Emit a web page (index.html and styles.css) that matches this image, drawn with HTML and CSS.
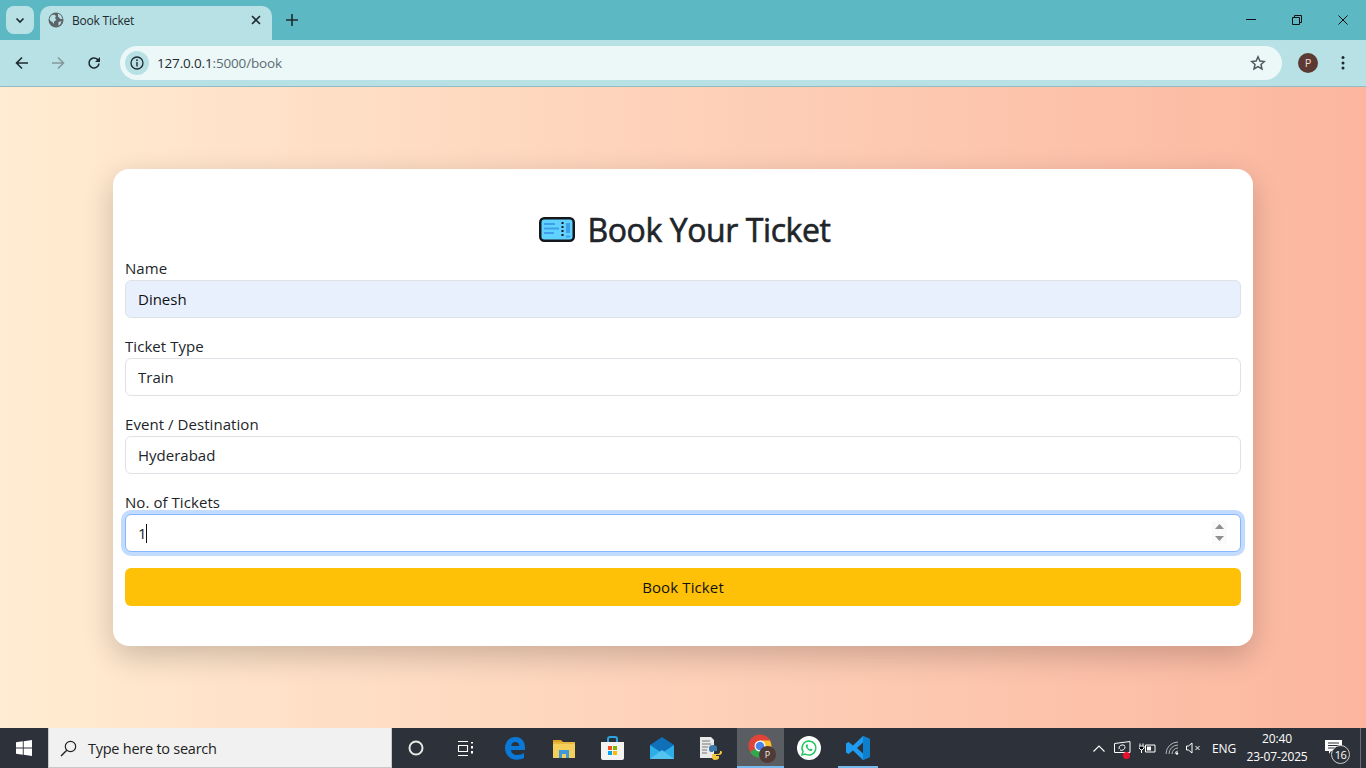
FILE: index.html
```html
<!DOCTYPE html>
<html lang="en">
<head>
  <meta charset="UTF-8">
  <title>Book Ticket</title>
  <link rel="stylesheet" href="styles.css">
</head>
<body>
  <div class="tabstrip">
    <div class="tab-menu">
      <svg width="12" height="12" viewBox="0 0 12 12"><path d="M2.5 4.500 6 8l3.500-3.500" fill="none" stroke="#1f2a2e" stroke-width="1.700"/></svg>
    </div>
    <div class="tab">
      <svg class="tab-globe" width="16" height="16" viewBox="0 0 16 16"><circle cx="8" cy="8" r="7.500" fill="#5c6468"/><path d="M3 3.500 6 2.500l2 1.500-1 2 1.500 2-2 1-1 3-1-2-2-1-1-2zM10 1.500l3 2 1.500 3.500-2 0-2.500-2.500zM10.500 10l3-1-1 3-2 2z" fill="#b8e1e6"/></svg>
      <span class="tab-title">Book Ticket</span>
      <svg width="10" height="10" viewBox="0 0 10 10"><path d="M1 1l8 8M9 1l-8 8" stroke="#1f2a2e" stroke-width="1.600"/></svg>
    </div>
    <svg class="tab-new" width="12" height="12" viewBox="0 0 12 12"><path d="M6 0v12M0 6h12" stroke="#1f2a2e" stroke-width="1.600"/></svg>
    <div class="win-controls">
      <span class="win-btn"><svg width="10" height="10" viewBox="0 0 10 10"><path d="M0 4.500h10" stroke="#111" stroke-width="1"/></svg></span>
      <span class="win-btn"><svg width="10" height="10" viewBox="0 0 10 10"><path d="M.5 2.500h7v7h-7zM2.500 2.500v-2h7v7h-2" fill="none" stroke="#111"/></svg></span>
      <span class="win-btn"><svg width="10" height="10" viewBox="0 0 10 10"><path d="M.5.500l9 9M9.500.500l-9 9" stroke="#111"/></svg></span>
    </div>
  </div>

  <div class="toolbar">
    <svg class="nav-icon" width="14" height="14" viewBox="0 0 14 14"><path d="M13 7H2M7 1.500 1.500 7 7 12.500" fill="none" stroke="#1f2a2e" stroke-width="1.600"/></svg>
    <svg class="nav-icon" width="14" height="14" viewBox="0 0 14 14"><path d="M1 7h11M7 1.500 12.500 7 7 12.500" fill="none" stroke="#87989c" stroke-width="1.600"/></svg>
    <svg class="nav-icon" width="14" height="14" viewBox="0 0 14 14"><path d="M12 7.500A5 5 0 1 1 10.500 3.400L12.500 5" fill="none" stroke="#1f2a2e" stroke-width="1.600"/><path d="M13 1v5H8z" fill="#1f2a2e"/></svg>
    <div class="omnibox">
      <span class="site-info">
        <svg width="14" height="14" viewBox="0 0 14 14"><circle cx="7" cy="7" r="6" fill="none" stroke="#1f2a2e" stroke-width="1.300"/><path d="M7 6v4.500" stroke="#1f2a2e" stroke-width="1.400"/><circle cx="7" cy="4.200" r=".9" fill="#1f2a2e"/></svg>
      </span>
      <span class="url">127.0.0.1<span class="url-rest">:5000/book</span></span>
      <svg class="star" width="16" height="16" viewBox="0 0 16 16"><path d="M8 1.800l1.900 4.200 4.500.5-3.400 3 1 4.500L8 11.700 4 14l1-4.500-3.400-3 4.500-.5z" fill="none" stroke="#4d5a5e" stroke-width="1.500"/></svg>
    </div>
    <span class="avatar">P</span>
    <svg class="kebab" width="4" height="16" viewBox="0 0 4 16"><circle cx="2" cy="2.500" r="1.500" fill="#1f2a2e"/><circle cx="2" cy="8" r="1.500" fill="#1f2a2e"/><circle cx="2" cy="13" r="1.500" fill="#1f2a2e"/></svg>
  </div>

  <main class="page">
    <form class="card">
      <h2 class="card-title">
        <svg width="36" height="25" viewBox="0 0 36 25"><rect x="1.250" y="1.250" width="33.500" height="22.500" rx="4" fill="#5fd2ff" stroke="#14181c" stroke-width="2.500"/><path d="M5 6h11v2H5zM5 10.500h15v2H5zM5 15h10v2H5zM27 6h4v10h-4zM27 18.500h4v2h-4z" fill="#3f9fea"/><path d="M23.500 5v2M23.500 9v2M23.500 13v2M23.500 17v2" stroke="#14181c" stroke-width="2"/></svg>
        <span>Book Your Ticket</span>
      </h2>
      <label class="field-label">Name</label>
      <input class="field field-autofill" type="text" value="Dinesh">
      <label class="field-label">Ticket Type</label>
      <input class="field" type="text" value="Train">
      <label class="field-label">Event / Destination</label>
      <input class="field" type="text" value="Hyderabad">
      <label class="field-label">No. of Tickets</label>
      <div class="field-wrap">
        <input class="field field-focus" type="text" value="1">
        <span class="caret"></span>
        <span class="spinner">
          <svg width="9" height="5" viewBox="0 0 9 5"><path d="M4.500 0 9 5H0z" fill="#8f8f8f"/></svg>
          <svg width="9" height="5" viewBox="0 0 9 5"><path d="M0 0h9L4.500 5z" fill="#8f8f8f"/></svg>
        </span>
      </div>
      <button class="submit" type="button">Book Ticket</button>
    </form>
  </main>

  <footer class="taskbar">
    <div class="start">
      <svg width="16" height="16" viewBox="0 0 16 16"><path d="M0 2.300 6.800 1.300V7.500H0zM7.700 1.200 16 0V7.500H7.700zM0 8.400H6.800V14.700L0 13.700zM7.700 8.400H16V16L7.700 14.800z" fill="#fff"/></svg>
    </div>
    <div class="search">
      <svg width="17" height="17" viewBox="0 0 17 17"><circle cx="10.500" cy="6.500" r="5.200" fill="none" stroke="#222" stroke-width="1.200"/><path d="M6.800 10.200 1 16" stroke="#222" stroke-width="1.400"/></svg>
      <span>Type here to search</span>
    </div>
    <div class="task-icons">
      <span class="task-slot task-nudge"><svg width="16" height="16" viewBox="0 0 16 16"><circle cx="8" cy="8" r="6.500" fill="none" stroke="#e8e8e8" stroke-width="2"/></svg></span>
      <span class="task-slot task-nudge"><svg width="16" height="15" viewBox="0 0 16 15"><path d="M1 .500h10M1 14.500h10M1.500 4.500h9v6h-9z" fill="none" stroke="#fff" stroke-width="1.100"/><path d="M14 1h2v1.500h-2zM14 5h2v2.500h-2zM14 10h2v2.500h-2z" fill="#fff"/></svg></span>
      <span class="task-slot"><svg width="22" height="24" viewBox="0 0 22 24"><path d="M1 12C1 5 6 1 11.500 1 17.500 1 21 5.500 21 11.500V14H7c.3 3.500 3 5 6 5 3 0 5.500-1 7-2v5c-2 1-4.500 1.700-7.500 1.700C6 23.700 1 19 1 12zM7.200 10h8c0-2.500-1.500-4-3.900-4S7.600 7.500 7.200 10z" fill="#0a78d7"/></svg></span>
      <span class="task-slot"><svg width="22" height="20" viewBox="0 0 22 20"><path d="M0 2h8l2 2H0z" fill="#e0a020"/><path d="M0 4h22v16H0z" fill="#f5cf5c"/><path d="M0 4h22v2H0z" fill="#e9b93d"/><path d="M6 12h10v8h-3v-4h-4v4H6z" fill="#3d9ad9"/></svg></span>
      <span class="task-slot"><svg width="23" height="24" viewBox="0 0 23 24"><path d="M7 6V3a2 2 0 0 1 2-2h5a2 2 0 0 1 2 2v3" fill="none" stroke="#2aa4e0" stroke-width="2"/><path d="M0 6h23v16a2 2 0 0 1-2 2H2a2 2 0 0 1-2-2z" fill="#f3f3f3"/><path d="M7 10h4v4H7z" fill="#f25022"/><path d="M12 10h4v4h-4z" fill="#7fba00"/><path d="M7 15h4v4H7z" fill="#00a4ef"/><path d="M12 15h4v4h-4z" fill="#ffb900"/></svg></span>
      <span class="task-slot"><svg width="24" height="22" viewBox="0 0 24 22"><path d="M12 0 24 8v14H0V8z" fill="#0f6fb8"/><path d="M0 8l12 8 12-8v14H0z" fill="#2eaee8"/><path d="M0 22 12 13l12 9z" fill="#55c3f0"/></svg></span>
      <span class="task-slot"><svg width="24" height="24" viewBox="0 0 24 24"><path d="M1 1h11l3 3v18H1z" fill="#e9e9e9"/><path d="M3 5h8M3 8h9M3 11h6M3 14h5M3 17h5" stroke="#777" stroke-width="1"/><path d="M10 12c0-2 1-3 4-3s4 1 4 3v3h-4v1h-2c-1 0-2-1-2-3z" fill="#3a79ac"/><path d="M23 16c0 2-1 3-3 3h-3v1h3v2c0 1-2 2-4 2s-3-1-3-3v-3h6c1 0 2-1 2-2v-1c1 0 2 0 2 1z" fill="#f5c93b"/></svg></span>
      <span class="task-slot task-active">
        <svg width="26" height="26" viewBox="0 0 26 26"><circle cx="12" cy="12" r="11.500" fill="#de4437"/><path d="M12 12 2 18A11.500 11.500 0 0 0 12 23.500z" fill="#2fa84f"/><path d="M12 12V23.500A11.500 11.500 0 0 0 22 6.500H12z" fill="#fbc02d"/><circle cx="12" cy="12" r="5.500" fill="#fff"/><circle cx="12" cy="12" r="4.300" fill="#4a84ea"/></svg>
        <span class="task-badge">P</span>
      </span>
      <span class="task-slot"><svg width="24" height="24" viewBox="0 0 24 24"><circle cx="12" cy="12" r="12" fill="#fff"/><path d="M12 5a7 7 0 0 0-6 10.600L5 19l3.500-.9A7 7 0 1 0 12 5z" fill="none" stroke="#25c560" stroke-width="1.500"/><path d="M9.500 8.500c-1 .8-1 2 0 3.500s2.500 3 4.200 3c1 0 1.800-.7 1.800-1.500l-1.800-1-.8.800c-1-.3-2-1.300-2.500-2.500l.8-.8-1-2z" fill="#25c560"/></svg></span>
      <span class="task-slot task-open"><svg width="24" height="24" viewBox="0 0 24 24"><path d="M17 0 24 3v18l-7 3L7 14.500 2.500 18 0 16.500V7.500L2.500 6 7 9.500zM17 6.500 11 12l6 5.500z" fill="#1f9cf0"/><path d="M17 0 24 3v18l-7 3z" fill="#0d7fcc"/></svg></span>
    </div>
    <div class="tray">
      <span class="tray-item tray-chevron"><svg width="12" height="7" viewBox="0 0 12 7"><path d="M.5 6.500 6 1l5.500 5.500" fill="none" stroke="#fff" stroke-width="1.100"/></svg></span>
      <span class="tray-item tray-meet">
        <svg width="17" height="15" viewBox="0 0 17 15"><path d="M.5 2.500 16 .5v11H.5z" fill="none" stroke="#fff"/><path d="M5 8a3.500 3.500 0 0 1 6-3M11 5.500A3.500 3.500 0 0 1 6 9" fill="none" stroke="#fff"/></svg>
        <span class="tray-dot"></span>
      </span>
      <span class="tray-item tray-battery"><svg width="17" height="11" viewBox="0 0 17 11"><path d="M6.500 2h9.500v7H6.500z" fill="none" stroke="#fff"/><path d="M8 3.500h4v4H8z" fill="#fff"/><path d="M1 .500v2M4 .500v2M0 3h5v2L3 7H2L0 5zM2.500 7v3" stroke="#fff" stroke-width="1"/></svg></span>
      <span class="tray-item tray-wifi"><svg width="14" height="14" viewBox="0 0 14 14"><path d="M1 13A12 12 0 0 1 13 1M4 13a9 9 0 0 1 9-9M7 13a6 6 0 0 1 6-6M10 13a3 3 0 0 1 3-3" fill="none" stroke="#b5b8bb" stroke-width="1"/><circle cx="12" cy="12.500" r="1.200" fill="#fff"/></svg></span>
      <span class="tray-item tray-volume"><svg width="15" height="12" viewBox="0 0 15 12"><path d="M.5 4h2L6 1v10L2.500 8h-2z" fill="none" stroke="#fff"/><path d="M9.500 4l4 4M13.500 4l-4 4" stroke="#fff"/></svg></span>
      <span class="tray-item tray-lang">ENG</span>
      <span class="clock"><span>20:40</span><span>23-07-2025</span></span>
      <span class="notify">
        <svg width="17" height="14" viewBox="0 0 17 14"><path d="M0 0h17v11H6l-2 3v-3H0z" fill="#fff"/><path d="M3 3h11M3 5.500h11M3 8h8" stroke="#2d3139"/></svg>
        <span class="notify-count">16</span>
      </span>
      <span class="show-desktop"></span>
    </div>
  </footer>
</body>
</html>
```

FILE: styles.css
```css
* { box-sizing: border-box; }
html, body { height: 100%; }
body {
  margin: 0;
  height: 768px;
  overflow: hidden;
  display: flex;
  flex-direction: column;
  font-family: "Open Sans", "Noto Sans", sans-serif;
  color: #212529;
}

/* browser top */
.tabstrip { height: 40px; background: #5cb8c2; display: flex; align-items: flex-end; padding-left: 6px; flex: none; }
.tab-menu { width: 28px; height: 28px; margin-bottom: 6px; background: #b8e1e6; border-radius: 8px; display: flex; align-items: center; justify-content: center; }
.tab { width: 232px; height: 34px; margin-left: 6px; padding: 0 11px 6px 8px; background: #b8e1e6; border-radius: 10px 10px 0 0; display: flex; align-items: center; }
.tab-globe { flex: none; }
.tab-title { flex: 1; margin-left: 8px; font-size: 12px; letter-spacing: -.2px; color: #1f2a2e; }
.tab-new { margin: 0 0 14px 14px; }
.win-controls { margin-left: auto; height: 40px; display: flex; }
.win-btn { width: 46px; display: flex; align-items: center; justify-content: center; }

.toolbar { height: 47px; flex: none; background: #b8e1e6; border-bottom: 1px solid #93bcc2; display: flex; align-items: center; padding: 0 0 1px 15px; gap: 22px; }
.nav-icon { flex: none; }
.omnibox { width: 1162px; height: 34px; margin-left: -3px; background: #ecf8f8; border-radius: 17px; display: flex; align-items: center; padding: 0 16px 0 5px; }
.site-info { width: 24px; height: 24px; border-radius: 50%; background: #b8e1e6; display: flex; align-items: center; justify-content: center; }
.url { margin-left: 8px; font-size: 13.500px; letter-spacing: -.16px; color: #1f2a2e; }
.url-rest { color: #5b6b72; }
.star { margin-left: auto; }
.avatar { width: 20px; height: 20px; margin-left: -6px; border-radius: 50%; background: #5c3a33; color: #f3dcd6; font-size: 11px; display: flex; align-items: center; justify-content: center; flex: none; }
.kebab { margin-left: 1px; flex: none; }

/* the page itself */
.page { flex: 1; background: linear-gradient(90deg, #ffecd2, #fcb69f); display: flex; align-items: center; justify-content: center; }
.card { width: 1140px; padding: 40px 12px; background: #fff; border-radius: 16px; box-shadow: 0 10px 30px rgba(0, 0, 0, .2); }
.card-title { margin: 0 0 8px; padding: 3px 0 0 3px; height: 38.400px; font-size: 32px; line-height: 38.400px; font-weight: 500; letter-spacing: -.42px; display: flex; align-items: center; justify-content: center; gap: 13px; -webkit-text-stroke: .6px #212529; }
.field-label { display: block; height: 24px; font-size: 15px; line-height: 24px; letter-spacing: .06px; }
.field { display: block; width: 100%; height: 38px; margin-bottom: 16px; padding: 0 12px; border: 1px solid #dee2e6; border-radius: 6px; background: #fff; color: #212529; font: 15px "Open Sans", "Noto Sans", sans-serif; outline: none; }
.field-autofill { background: #e8f0fe; color: #111; }
.field-focus { border-color: #86b7fe; box-shadow: 0 0 0 4px #c2dbfe; }
.field-wrap { position: relative; }
.caret { position: absolute; left: 21px; top: 10px; width: 1px; height: 19px; background: #111; }
.spinner { position: absolute; right: 14px; top: 7px; width: 15px; height: 23px; background: #fafafa; display: flex; flex-direction: column; align-items: center; justify-content: center; gap: 7px; }
.submit { display: block; width: 100%; height: 38px; border: none; border-radius: 6px; background: #ffc107; color: #111; font: 15px "Open Sans", "Noto Sans", sans-serif; letter-spacing: .12px; }

/* windows taskbar */
.taskbar { height: 40px; flex: none; background: #2d3139; display: flex; align-items: stretch; color: #fff; }
.start { width: 48px; display: flex; align-items: center; justify-content: center; }
.search { width: 344px; background: #f1f1f1; border: 1px solid #c8c8c8; border-width: 0 1px 1px 1px; display: flex; align-items: center; padding: 1px 0 0 11px; gap: 11px; color: #222; font-size: 14.500px; letter-spacing: -.25px; }
.task-icons { display: flex; }
.task-slot { position: relative; width: 49px; display: flex; align-items: center; justify-content: center; }
.task-nudge { padding-right: 2px; }
.task-active { width: 47px; margin-left: 2px; background: #5a5d62; border-bottom: 2px solid #76b9ed; }
.task-open::after { content: ""; position: absolute; left: 5px; right: 4px; bottom: 0; height: 2px; background: #76b9ed; }
.task-badge { position: absolute; left: 22px; top: 18px; width: 17px; height: 17px; border-radius: 50%; background: #4f3a35; color: #eee; font-size: 9px; display: flex; align-items: center; justify-content: center; }
.tray { margin-left: auto; display: flex; align-items: center; font-size: 12px; }
.tray-item { display: flex; align-items: center; justify-content: center; }
.tray-chevron { width: 24px; }
.tray-meet { position: relative; width: 23px; }
.tray-battery { width: 26px; }
.tray-wifi { width: 23px; }
.tray-volume { width: 21px; }
.tray-lang { width: 40px; letter-spacing: -.2px; }
.tray-dot { position: absolute; left: 12px; bottom: -3px; width: 7px; height: 7px; border-radius: 50%; background: #e8112d; }
.clock { width: 66px; display: flex; flex-direction: column; align-items: center; line-height: 18px; letter-spacing: -.15px; }
.notify { position: relative; width: 30px; height: 24px; margin-left: 8px; }
.notify svg { position: absolute; left: 7px; top: 4px; }
.notify-count { position: absolute; left: 13px; top: 9px; width: 19px; height: 19px; border: 1px solid #ccc; border-radius: 50%; background: #2d3139; font-size: 11px; line-height: 17px; text-align: center; letter-spacing: -.5px; }
.show-desktop { width: 18px; height: 40px; position: relative; }
.show-desktop::after { content: ""; position: absolute; right: 5px; top: 0; width: 1px; height: 40px; background: #6a6d72; }
```
